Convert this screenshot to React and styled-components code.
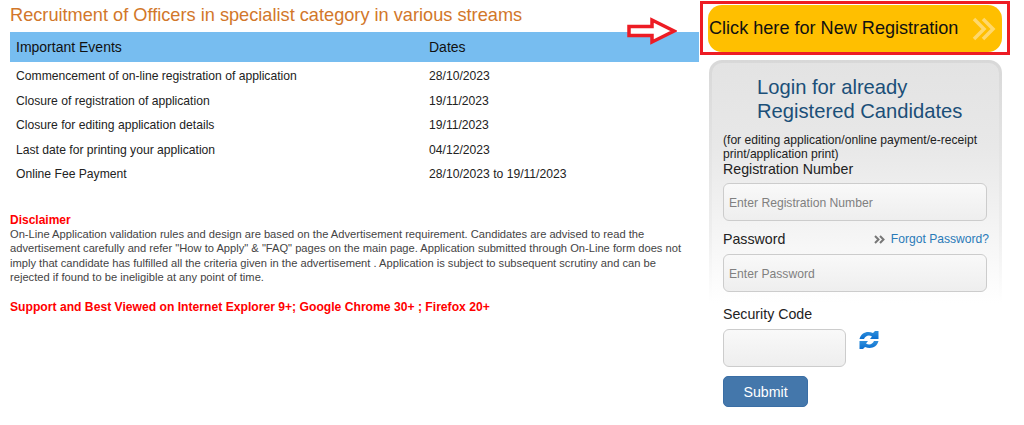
import React from "react";
import styled, { createGlobalStyle } from "styled-components";

const events = [
    ["Commencement of on-line registration of application", "28/10/2023"],
    ["Closure of registration of application", "19/11/2023"],
    ["Closure for editing application details", "19/11/2023"],
    ["Last date for printing your application", "04/12/2023"],
    ["Online Fee Payment", "28/10/2023 to 19/11/2023"],
];

function App() {
    return (
        <Page>
            <GlobalStyle />
            <LeftColumn>
                <Title>Recruitment of Officers in specialist category in various streams</Title>
                <EventsTable>
                    <thead>
                        <tr>
                            <HeadCell>Important Events</HeadCell>
                            <HeadCell $narrow>Dates</HeadCell>
                        </tr>
                    </thead>
                    <tbody>
                        {events.map(([name, date]) => (
                            <tr key={name}>
                                <Cell>{name}</Cell>
                                <Cell>{date}</Cell>
                            </tr>
                        ))}
                    </tbody>
                </EventsTable>
                <DisclaimerTitle>Disclaimer</DisclaimerTitle>
                <DisclaimerText>
                    On-Line Application validation rules and design are based on the Advertisement requirement. Candidates are advised to read the
                    <br />
                    advertisement carefully and refer "How to Apply" &amp; "FAQ" pages on the main page. Application submitted through On-Line form does not
                    <br />
                    imply that candidate has fulfilled all the criteria given in the advertisement . Application is subject to subsequent scrutiny and can be
                    <br />
                    rejected if found to be ineligible at any point of time.
                </DisclaimerText>
                <SupportNote>Support and Best Viewed on Internet Explorer 9+; Google Chrome 30+ ; Firefox 20+</SupportNote>
            </LeftColumn>
            <RightColumn>
                <PointerArrow viewBox="0 0 50 28" aria-hidden="true">
                    <path
                        d="M2 9.500H25V3L47 14L25 25V18.500H2Z"
                        fill="#fff"
                        stroke="#ed1c24"
                        strokeWidth="3.5"
                    />
                </PointerArrow>
                <RegisterFrame>
                    <RegisterButton>
                        Click here for New Registration
                        <ChevronIcon viewBox="0 0 24 24" aria-hidden="true">
                            <path d="M2 2L12 12L2 22M11 2L21 12L11 22" fill="none" stroke="#ffd86b" strokeWidth="3.500" />
                        </ChevronIcon>
                    </RegisterButton>
                </RegisterFrame>
                <LoginCard>
                    <LoginHeading>
                        Login for already
                        <br />
                        Registered Candidates
                    </LoginHeading>
                    <LoginNote>(for editing application/online payment/e-receipt print/application print)</LoginNote>
                    <FieldLabel>Registration Number</FieldLabel>
                    <TextInput placeholder="Enter Registration Number" />
                    <PasswordRow>
                        <FieldLabel>Password</FieldLabel>
                        <ForgotLink>
                            <SmallChevrons viewBox="0 0 12 9" aria-hidden="true">
                                <path d="M1 1L4.500 4.500L1 8M6 1L9.500 4.500L6 8" fill="none" stroke="#777" strokeWidth="2" />
                            </SmallChevrons>
                            Forgot Password?
                        </ForgotLink>
                    </PasswordRow>
                    <TextInput placeholder="Enter Password" />
                </LoginCard>
                <SecurityBlock>
                    <FieldLabel>Security Code</FieldLabel>
                    <SecurityRow>
                        <CodeInput />
                        <RefreshIcon viewBox="0 0 20 20" aria-hidden="true">
                            <defs>
                                <linearGradient id="refreshBlue" x1="0" y1="0" x2="0" y2="1">
                                    <stop offset="0" stopColor="#2f8fdc" />
                                    <stop offset="1" stopColor="#0a6fd0" />
                                </linearGradient>
                            </defs>
                            <path d="M0.500 9C2 3 8 0.500 14 3L16 1H19.500V9H11L13 6.500C9.500 4.500 6.500 6 5 9Z" fill="url(#refreshBlue)" />
                            <path d="M19.500 11C18 17 12 19.500 6 17L4 19H0.500V11H9L7 13.500C10.500 15.500 13.500 14 15 11Z" fill="url(#refreshBlue)" />
                        </RefreshIcon>
                    </SecurityRow>
                    <SubmitButton>Submit</SubmitButton>
                </SecurityBlock>
            </RightColumn>
        </Page>
    );
}

const GlobalStyle = createGlobalStyle`
    body {
        margin: 0;
        background: #fff;
        font-family: "Liberation Sans", Arial, sans-serif;
    }
`;
const Page = styled.div`
    display: flex;
    width: 1024px;
    height: 425px;
    overflow: hidden;
`;
const LeftColumn = styled.div`
    width: 689px;
    margin-left: 10px;
    flex-shrink: 0;
`;
const Title = styled.h2`
    margin: 5px 0 0;
    height: 27px;
    font-size: 18.2px;
    line-height: 20px;
    font-weight: 400;
    color: #d2772a;
`;
const EventsTable = styled.table`
    width: 100%;
    border-collapse: collapse;
    table-layout: fixed;
    color: #222;
`;
const HeadCell = styled.th`
    height: 30px;
    width: ${({ $narrow }) => ($narrow ? "276px" : "auto")};
    padding: 0 6px 1px;
    box-sizing: border-box;
    background: #77bdf0;
    font-size: 14px;
    font-weight: 400;
    text-align: left;
    color: #111;
`;
const Cell = styled.td`
    height: 24.5px;
    padding: 4px 6px 0;
    box-sizing: border-box;
    font-size: 12.15px;
`;
const DisclaimerTitle = styled.div`
    margin-top: 28px;
    font-size: 12px;
    line-height: 14px;
    font-weight: 700;
    color: #f00;
`;
const DisclaimerText = styled.p`
    margin: 0;
    font-size: 11.15px;
    line-height: 14.5px;
    white-space: nowrap;
    color: #444;
`;
const SupportNote = styled.div`
    margin-top: 15px;
    font-size: 12.15px;
    line-height: 14px;
    font-weight: 700;
    color: #f00;
`;
const RightColumn = styled.div`
    position: relative;
    width: 325px;
    flex-shrink: 0;
    padding-left: 1px;
    box-sizing: border-box;
`;
const PointerArrow = styled.svg`
    position: absolute;
    left: -72px;
    top: 17px;
    width: 50px;
    height: 28px;
`;
const RegisterFrame = styled.div`
    width: 310px;
    height: 54px;
    margin-top: 1px;
    padding: 1px 5px 0;
    box-sizing: border-box;
    border: 3px solid #ed1c24;
`;
const RegisterButton = styled.div`
    display: flex;
    align-items: center;
    justify-content: space-between;
    height: 47px;
    padding: 0 6px 0 1px;
    background: #ffbf00;
    border-radius: 14px;
    font-size: 18.1px;
    color: #111;
`;
const ChevronIcon = styled.svg`
    width: 24px;
    height: 24px;
`;
const LoginCard = styled.div`
    width: 293px;
    height: 243px;
    margin: 5px 0 0 9px;
    padding: 13px 11px 0;
    box-sizing: border-box;
    border: 3px solid transparent;
    border-bottom: 0;
    border-radius: 13px 13px 0 0;
    background:
        linear-gradient(#e3e3e3, #e8e8e8 35%, #fff 100%) padding-box,
        linear-gradient(#d8d8d8, #eee 70%, #fff 100%) border-box;
`;
const LoginHeading = styled.h3`
    margin: 0 0 0 34px;
    font-size: 20.2px;
    line-height: 23.5px;
    font-weight: 400;
    color: #1b4f78;
`;
const LoginNote = styled.div`
    margin-top: 10px;
    font-size: 12.1px;
    line-height: 14px;
    color: #222;
`;
const FieldLabel = styled.div`
    font-size: 14.2px;
    line-height: 16px;
    color: #222;
`;
const TextInput = styled.input`
    display: block;
    width: 264px;
    height: 38px;
    margin-top: 6px;
    padding: 2px 5px 0;
    box-sizing: border-box;
    border: 1px solid #ccc;
    border-radius: 6px;
    background: linear-gradient(#f9f9f9, #eee);
    font-family: inherit;
    font-size: 12.15px;
    &::placeholder {
        color: #808080;
    }
`;
const PasswordRow = styled.div`
    display: flex;
    align-items: center;
    justify-content: space-between;
    width: 266px;
    margin: 10px 0 7px;
`;
const ForgotLink = styled.span`
    display: flex;
    align-items: center;
    gap: 5px;
    font-size: 12.1px;
    color: #2a7ab8;
`;
const SmallChevrons = styled.svg`
    width: 12px;
    height: 9px;
`;
const SecurityBlock = styled.div`
    margin: 3px 0 0 23px;
`;
const SecurityRow = styled.div`
    display: flex;
    align-items: flex-start;
    gap: 13px;
    margin-top: 7px;
`;
const CodeInput = styled(TextInput)`
    width: 123px;
    margin: 0;
`;
const RefreshIcon = styled.svg`
    width: 20px;
    height: 20px;
    margin-top: 1px;
`;
const SubmitButton = styled.button`
    display: block;
    width: 85px;
    height: 31px;
    margin-top: 9px;
    padding: 0;
    border: 1px solid #3a6ea5;
    border-radius: 5px;
    background: #4477ab;
    color: #fff;
    font-family: inherit;
    font-size: 14.2px;
`;
export default App;
